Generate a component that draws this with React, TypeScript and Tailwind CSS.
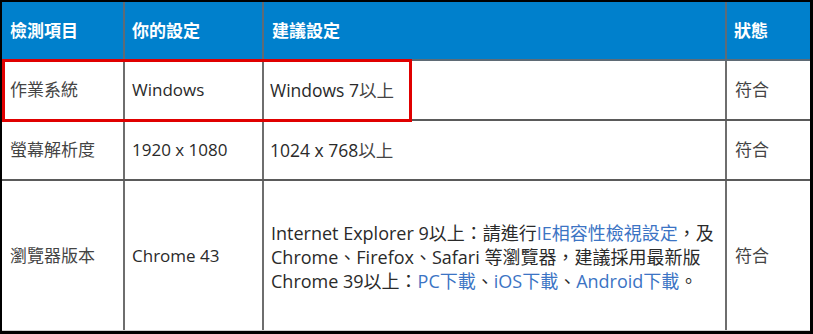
import React from "react";

const font = { fontFamily: '"Open Sans", "Noto Sans CJK TC", sans-serif' };

export default function App() {
  const link = "text-[#3c74c4]";
  return (
    <div className="w-[813px] h-[334px] bg-white" style={font}>
      <div className="relative w-[813px] h-[334px] border-l-2 border-t-2 border-r-[3px] border-b-[3px] border-black flex flex-col text-[17px] text-[#2a2a2a]">
        {/* header */}
        <div className="flex h-[59px] bg-[#0080cc] border-b-2 border-[#5f6b75] text-white font-bold text-[17px]">
          <div className="w-[121px] flex items-center pl-[8px]">檢測項目</div>
          <div className="w-[139px] flex items-center pl-[7px] border-l-2 border-[#5f6b75]">你的設定</div>
          <div className="w-[463px] flex items-center pl-[8px] border-l-2 border-[#5f6b75]">建議設定</div>
          <div className="w-[85px] flex items-center pl-[7px] border-l-2 border-[#5f6b75]">狀態</div>
        </div>
        {/* row 1 */}
        <div className="flex h-[60px] border-b-2 border-[#5a5a5a]">
          <div className="w-[121px] flex items-center pl-[8px] text-[#444]">作業系統</div>
          <div className="w-[139px] flex items-center pl-[7px] border-l-2 border-[#6e6e6e]">Windows</div>
          <div className="w-[463px] flex items-center pl-[6px] border-l-2 border-[#6e6e6e] text-[17.5px]">
            Windows 7<span className="text-[#444]">以上</span>
          </div>
          <div className="w-[85px] flex items-center pl-[8px] border-l-2 border-[#6e6e6e] text-[#444]">符合</div>
        </div>
        {/* row 2 */}
        <div className="flex h-[60px] border-b-2 border-[#5a5a5a]">
          <div className="w-[121px] flex items-center pl-[8px] text-[#444]">螢幕解析度</div>
          <div className="w-[139px] flex items-center pl-[7px] border-l-2 border-[#6e6e6e]">1920 x 1080</div>
          <div className="w-[463px] flex items-center pl-[6px] border-l-2 border-[#6e6e6e] text-[17.5px]">
            1024 x 768<span className="text-[#444]">以上</span>
          </div>
          <div className="w-[85px] flex items-center pl-[8px] border-l-2 border-[#6e6e6e] text-[#444]">符合</div>
        </div>
        {/* row 3 */}
        <div className="flex flex-1 border-b border-[#cfcfcf]">
          <div className="w-[121px] flex items-center pl-[8px] text-[#444]">瀏覽器版本</div>
          <div className="w-[139px] flex items-center pl-[7px] border-l-2 border-[#6e6e6e]">Chrome 43</div>
          <div className="w-[463px] flex items-center pl-[7px] border-l-2 border-[#6e6e6e] text-[18px] leading-[24px] whitespace-nowrap">
            <div className="pt-[2px]">
              <div>
                Internet Explorer 9以上：請進行<span className={link}>IE相容性檢視設定</span>，及
              </div>
              <div>Chrome、Firefox、Safari 等瀏覽器，建議採用最新版</div>
              <div>
                Chrome 39以上：<span className={link}>PC下載</span>、<span className={link}>iOS下載</span>、
                <span className={link}>Android下載</span>。
              </div>
            </div>
          </div>
          <div className="w-[85px] flex items-center pl-[8px] border-l-2 border-[#6e6e6e] text-[#444]">符合</div>
        </div>
        {/* red highlight */}
        <div className="absolute left-0 top-[57px] w-[410px] h-[63px] border-[3px] border-[#e00000] pointer-events-none" />
      </div>
    </div>
  );
}
